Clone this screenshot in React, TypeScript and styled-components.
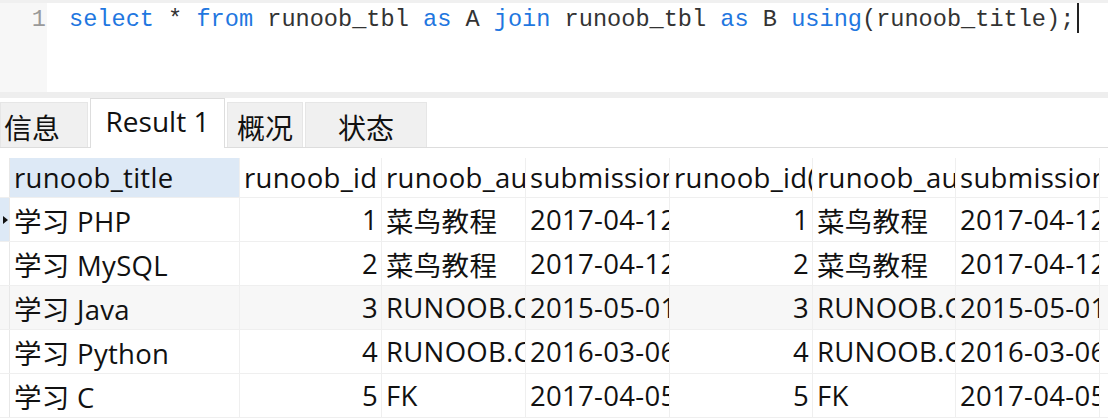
import React from "react";
import styled, { createGlobalStyle } from "styled-components";

const Global = createGlobalStyle`
  html, body { margin: 0; padding: 0; background: #fff; overflow: hidden; }
  #root { width: 1108px; height: 419px; overflow: hidden; }
`;

const Page = styled.div`
  width: 1108px;
  height: 419px;
  display: flex;
  flex-direction: column;
  background: #fff;
  overflow: hidden;
`;

const Editor = styled.div`
  height: 89px;
  display: flex;
  border-top: 3px solid #f0f0f0;
`;

const Gutter = styled.div`
  width: 47px;
  background: #f7f7f7;
  color: #9a9a9a;
  font-family: "Liberation Mono", monospace;
  font-size: 23.6px;
  line-height: 34px;
  text-align: right;
  box-sizing: border-box;
  padding-right: 1px;
`;

const Code = styled.div`
  flex: 1;
  padding-left: 22px;
  font-family: "Liberation Mono", monospace;
  font-size: 23.6px;
  line-height: 34px;
  color: #333;
  white-space: pre;
`;

const Kw = styled.span`
  color: #1f77e0;
`;

const Caret = styled.span`
  display: inline-block;
  width: 1.5px;
  height: 30px;
  background: #222;
  vertical-align: -7px;
  margin-left: 3px;
`;

const Band = styled.div`
  height: 6px;
  background: #eeeeee;
`;

const TabBar = styled.div`
  height: 50px;
  display: flex;
  align-items: flex-end;
  border-bottom: 1px solid #dddddd;
  box-sizing: border-box;
  background: #fff;
`;

const Tab = styled.div<{ $w: number; $active?: boolean; $pl?: number }>`
  width: ${(p) => p.$w}px;
  height: ${(p) => (p.$active ? 50 : 45)}px;
  box-sizing: border-box;
  margin-right: 2px;
  background: ${(p) => (p.$active ? "#ffffff" : "#f0f0f0")};
  border: 1px solid ${(p) => (p.$active ? "#dddddd" : "#e6e6e6")};
  border-bottom: none;
  font-family: "Open Sans", "Noto Sans CJK SC", sans-serif;
  font-size: 28px;
  color: #111;
  display: flex;
  align-items: center;
  justify-content: ${(p) => (p.$pl !== undefined ? "flex-start" : "center")};
  padding-left: ${(p) => p.$pl ?? 0}px;
  padding-top: ${(p) => (p.$active ? 0 : 3)}px;
  padding-bottom: ${(p) => (p.$active ? 5 : 0)}px;
  margin-bottom: ${(p) => (p.$active ? -1 : 0)}px;
  white-space: nowrap;
`;

const Grid = styled.div`
  margin-top: 8px;
  display: flex;
  flex-direction: column;
  font-family: "Open Sans", "Noto Sans CJK SC", sans-serif;
  font-size: 27.5px;
  color: #111;
`;

const Row = styled.div<{ $shade?: boolean }>`
  display: flex;
  height: 44px;
  background: ${(p) => (p.$shade ? "#f7f7f7" : "#ffffff")};
  border-bottom: 1px solid #efefef;
  box-sizing: border-box;
`;

const HeadRow = styled(Row)`
  height: 42px;
  padding-top: 2px;
`;

const Indicator = styled.div<{ $sel?: boolean }>`
  width: 10px;
  flex: none;
  background: ${(p) => (p.$sel ? "#dde9f6" : "transparent")};
  border-right: 1px solid #e8e8e8;
  box-sizing: border-box;
  display: flex;
  align-items: center;
  justify-content: center;
`;

const Arrow = styled.span`
  width: 0;
  height: 0;
  border-top: 4px solid transparent;
  border-bottom: 4px solid transparent;
  border-left: 5px solid #111;
  margin-left: 2px;
`;

const Cell = styled.div<{ $w: number; $right?: boolean; $head?: boolean }>`
  width: ${(p) => p.$w}px;
  flex: none;
  box-sizing: border-box;
  border-right: 1px solid #efefef;
  padding: 0 ${(p) => (p.$right ? 3 : 0)}px 0 ${(p) => (p.$right ? 0 : 4)}px;
  display: flex;
  align-items: center;
  justify-content: ${(p) => (p.$right ? "flex-end" : "flex-start")};
  white-space: nowrap;
  overflow: hidden;
  background: ${(p) => (p.$head ? "#dde9f6" : "transparent")};
`;

const Clip = styled.span`
  display: block;
  overflow: hidden;
  white-space: nowrap;
  letter-spacing: 0.3px;
`;

const widths = [230, 142, 144, 144, 143, 143, 144, 20];
const headers = [
  "runoob_title",
  "runoob_id",
  "runoob_author",
  "submission_date",
  "runoob_id(1)",
  "runoob_author(1)",
  "submission_date(1)",
  "",
];
const rightCols = [1, 4];

const data = [
  ["学习 PHP", "1", "菜鸟教程", "2017-04-12", "1", "菜鸟教程", "2017-04-12"],
  ["学习 MySQL", "2", "菜鸟教程", "2017-04-12", "2", "菜鸟教程", "2017-04-12"],
  ["学习 Java", "3", "RUNOOB.COM", "2015-05-01", "3", "RUNOOB.COM", "2015-05-01"],
  ["学习 Python", "4", "RUNOOB.COM", "2016-03-06", "4", "RUNOOB.COM", "2016-03-06"],
  ["学习 C", "5", "FK", "2017-04-05", "5", "FK", "2017-04-05"],
];

export default function App() {
  return (
    <Page>
      <Global />
      <Editor>
        <Gutter>1</Gutter>
        <Code>
          <Kw>select</Kw> * <Kw>from</Kw> runoob_tbl <Kw>as</Kw> A <Kw>join</Kw> runoob_tbl{" "}
          <Kw>as</Kw> B <Kw>using</Kw>(runoob_title);
          <Caret />
        </Code>
      </Editor>
      <Band />
      <TabBar>
        <Tab $w={88} $pl={3}>信息</Tab>
        <Tab $w={135} $active>Result 1</Tab>
        <Tab $w={76}>概况</Tab>
        <Tab $w={122}>状态</Tab>
      </TabBar>
      <Grid>
        <HeadRow>
          <Indicator />
          {headers.map((h, i) => (
            <Cell key={i} $w={widths[i]} $head={i === 0}>
              <Clip>{h}</Clip>
            </Cell>
          ))}
        </HeadRow>
        {data.map((r, ri) => (
          <Row key={ri} $shade={ri === 2}>
            <Indicator $sel={ri === 0}>{ri === 0 && <Arrow />}</Indicator>
            {r.map((v, ci) => (
              <Cell key={ci} $w={widths[ci]} $right={rightCols.includes(ci)}>
                <Clip>{v}</Clip>
              </Cell>
            ))}
            <Cell $w={widths[7]} />
          </Row>
        ))}
      </Grid>
    </Page>
  );
}
